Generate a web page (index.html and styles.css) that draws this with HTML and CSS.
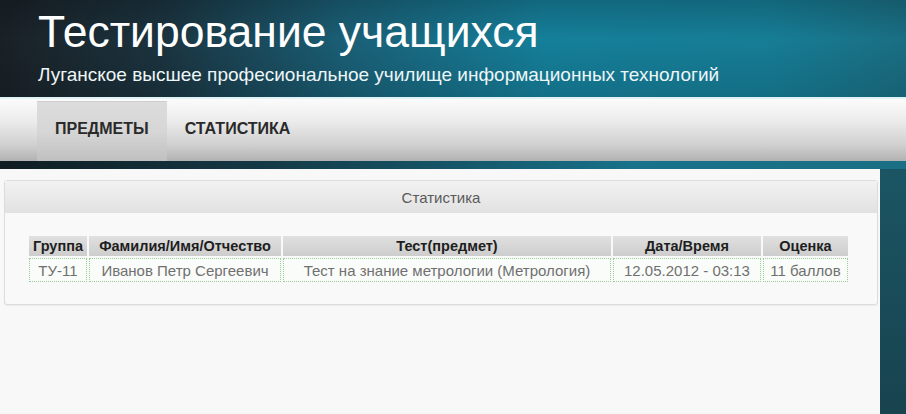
FILE: index.html
```html
<!DOCTYPE html>
<html lang="ru">
<head>
<meta charset="utf-8">
<title>Тестирование учащихся</title>
<link rel="stylesheet" href="styles.css">
</head>
<body>
<header class="site-header">
  <h1 class="site-title">Тестирование учащихся</h1>
  <p class="site-subtitle">Луганское высшее професиональное училище информационных технологий</p>
</header>
<nav class="nav">
  <a class="nav-item active" href="#">ПРЕДМЕТЫ</a>
  <a class="nav-item" href="#">СТАТИСТИКА</a>
</nav>
<div class="strip"></div>
<div class="layout">
  <main class="panel">
    <section class="card">
      <div class="card-head">Статистика</div>
      <div class="card-body">
        <table class="stats">
          <thead>
            <tr>
              <th class="c1">Группа</th>
              <th class="c2">Фамилия/Имя/Отчество</th>
              <th class="c3">Тест(предмет)</th>
              <th class="c4">Дата/Время</th>
              <th class="c5">Оценка</th>
            </tr>
          </thead>
          <tbody>
            <tr>
              <td>ТУ-11</td>
              <td>Иванов Петр Сергеевич</td>
              <td>Тест на знание метрологии (Метрология)</td>
              <td>12.05.2012 - 03:13</td>
              <td>11 баллов</td>
            </tr>
          </tbody>
        </table>
      </div>
    </section>
  </main>
  <aside class="side"></aside>
</div>
</body>
</html>
```
FILE: styles.css
```css
* { box-sizing: border-box; }
html, body { margin: 0; padding: 0; }
body {
  width: 906px;
  height: 414px;
  overflow: hidden;
  font-family: "Liberation Sans", Arial, sans-serif;
  background: #1b4f5c;
}
.site-header {
  height: 97px;
  padding: 6px 0 0 38px;
  background:
    linear-gradient(to bottom, rgba(0,0,0,0.18), rgba(0,0,0,0) 40%, rgba(0,0,0,0.12)),
    linear-gradient(to right, #1a2126 0%, #1b3440 18%, #1a5f76 38%, #157f9a 60%, #167d96 85%, #1a6e82 100%);
  color: #fff;
}
.site-title {
  margin: 0;
  font-size: 44.5px;
  font-weight: normal;
  line-height: 52px;
}
.site-subtitle {
  margin: 6px 0 0;
  font-size: 19px;
  line-height: 22px;
  color: #eef6f8;
}
.nav {
  height: 64px;
  display: flex;
  padding-left: 37px;
  background: linear-gradient(to bottom, #fbfbfb 0%, #ececec 35%, #cfcfcf 75%, #b2b2b2 100%);
  border-top: 2px solid #dff3f7;
}
.nav-item {
  display: flex;
  align-items: center;
  margin-top: 2px;
  border-top: 1px solid transparent;
  padding: 0 18px 6px 18px;
  font-size: 16px;
  font-weight: bold;
  color: #2a2a2a;
  text-decoration: none;
}
.nav-item.active {
  background: linear-gradient(to bottom, #dcdcdc 0%, #d6d6d6 50%, #c0c0c0 100%);
  border-top-color: #cfcfcf;
}
.strip {
  height: 8px;
  background: linear-gradient(to right, #0f1c22 0%, #143a47 30%, #17728a 70%, #1a6f84 100%);
}
.layout {
  display: flex;
  height: 245px;
}
.panel {
  width: 880px;
  background: #f8f8f8;
  padding: 11px 2px 0 4px;
}
.side {
  flex: 1;
  background: linear-gradient(to bottom, #1b5563, #18434f);
}
.card {
  border: 1px solid #dcdcdc;
  border-radius: 3px;
  background: #f9f9f9;
  height: 125px;
  box-shadow: 0 1px 1px rgba(0,0,0,0.05);
}
.card-head {
  height: 32px;
  line-height: 34px;
  text-align: center;
  font-size: 15px;
  color: #5a5a5a;
  background: linear-gradient(to bottom, #f2f2f2, #e2e2e2);
  border-bottom: 1px solid #e2e2e2;
}
.card-body {
  padding: 21px 0 0 22px;
}
.stats {
  border-collapse: separate;
  border-spacing: 2px;
}
.stats th {
  height: 20px;
  padding: 0 2px;
  font-size: 14.5px;
  background: linear-gradient(to bottom, #e0e0e0, #cdcdcd);
  color: #1e1e1e;
  font-weight: bold;
  text-align: center;
}
.stats td {
  height: 24px;
  padding: 0 2px;
  font-size: 15px;
  border: 1px dotted #99cc99;
  color: #707070;
  text-align: center;
  background: #fafcfa;
}
.c1 { width: 58px; }
.c2 { width: 192px; }
.c3 { width: 328px; }
.c4 { width: 148px; }
.c5 { width: 85px; }
```
